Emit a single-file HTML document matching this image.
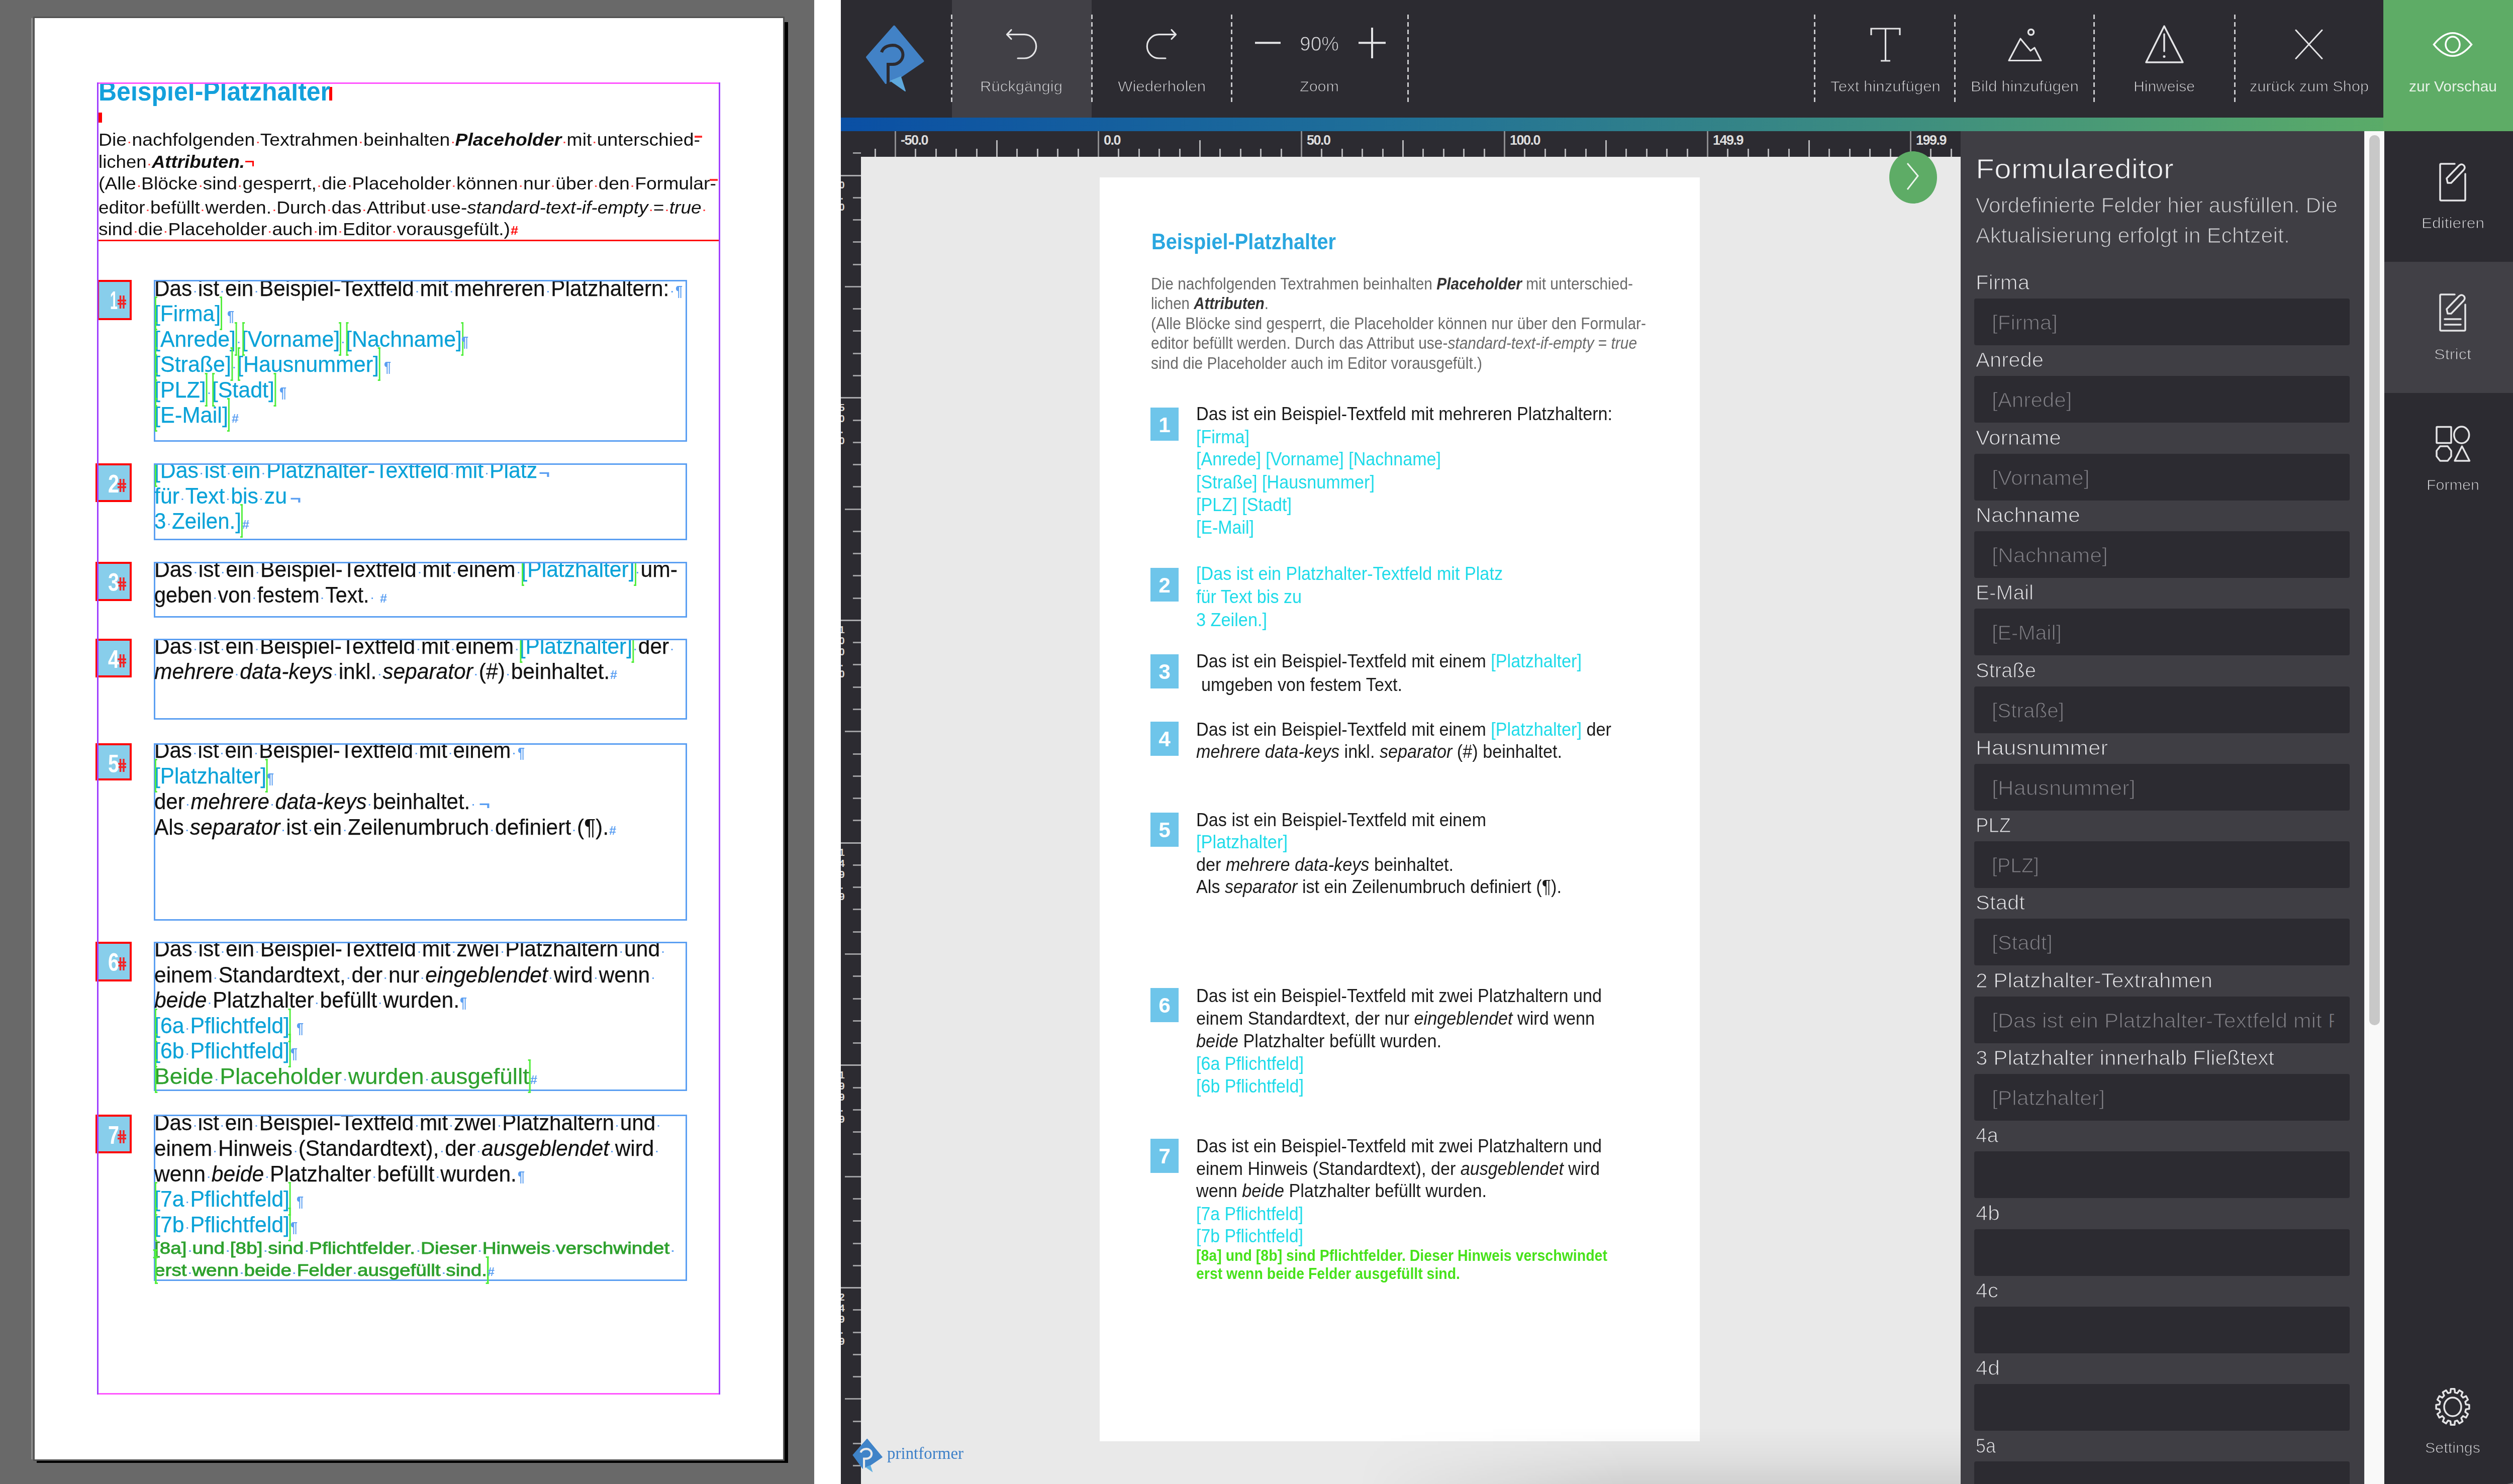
<!DOCTYPE html><html><head><meta charset="utf-8"><style>

html,body{margin:0;padding:0}
body{width:5020px;height:2953px;position:relative;overflow:hidden;background:#fff}
body>div,body>svg{position:absolute}
.t{white-space:pre;line-height:1}
s.d{text-decoration:none;position:relative}
s.d::after{content:'';position:absolute;left:38%;top:62%;width:3px;height:3px;background:var(--c)}
.ph{position:relative}
.ph::before,.ph::after{content:'';position:absolute;top:-9px;bottom:-9px;width:5px;border:3px solid #52ee3c;box-sizing:border-box}
.ph::before{left:1px;border-right:none}
.ph::after{right:-3px;border-left:none}
.phl{position:relative}.phr{position:relative}
.phl::before,.phr::after{content:'';position:absolute;top:-9px;bottom:-9px;width:5px;border:3px solid #52ee3c;box-sizing:border-box}
.phl::before{left:1px;border-right:none}
.phr::after{right:-3px;border-left:none}

</style></head><body>
<div style="left:0px;top:0px;width:1620px;height:2953px;background:#696969;"></div>
<div style="left:62px;top:36px;width:3px;height:2868px;background:#8e8e8e;"></div>
<div style="left:66px;top:33px;width:1495px;height:2874px;background:#535353;"></div>
<div style="left:69px;top:36px;width:1489px;height:2868px;background:#ffffff;"></div>
<div style="left:1561px;top:44px;width:7px;height:2867px;background:#000;"></div>
<div style="left:73px;top:2907px;width:1495px;height:4px;background:#000;"></div>
<div style="left:193px;top:164px;width:1240px;height:3px;background:#ff55ff;"></div>
<div style="left:193px;top:2772px;width:1240px;height:3px;background:#ff55ff;"></div>
<div style="left:193px;top:164px;width:3px;height:2611px;background:#a040ff;"></div>
<div style="left:1430px;top:164px;width:3px;height:2611px;background:#a040ff;"></div>
<div style="left:196px;top:477px;width:1234px;height:3px;background:#ff0000;"></div>
<div style="left:306px;top:557px;width:1061px;height:322px;box-sizing:border-box;border:3px solid #5b9ff2"></div>
<div style="left:306px;top:922px;width:1061px;height:153px;box-sizing:border-box;border:3px solid #5b9ff2"></div>
<div style="left:306px;top:1118px;width:1061px;height:111px;box-sizing:border-box;border:3px solid #5b9ff2"></div>
<div style="left:306px;top:1271px;width:1061px;height:161px;box-sizing:border-box;border:3px solid #5b9ff2"></div>
<div style="left:306px;top:1479px;width:1061px;height:353px;box-sizing:border-box;border:3px solid #5b9ff2"></div>
<div style="left:306px;top:1874px;width:1061px;height:297px;box-sizing:border-box;border:3px solid #5b9ff2"></div>
<div style="left:306px;top:2218px;width:1061px;height:331px;box-sizing:border-box;border:3px solid #5b9ff2"></div>
<div style="left:193px;top:557px;width:69px;height:80px;box-sizing:border-box;border:4px solid #ff0000;background:#88ceeb"></div>
<svg style="left:234px;top:588px" width="17" height="26" viewBox="0 0 17 26"><path d="M5.5 0 V26 M12 0 V26 M0 10 H17 M0 16.5 H17" stroke="#ff1010" stroke-width="3.4" fill="none" opacity="0.9"/></svg>
<div style="left:190px;top:922px;width:72px;height:77px;box-sizing:border-box;border:4px solid #ff0000;background:#88ceeb"></div>
<svg style="left:234px;top:953px" width="17" height="26" viewBox="0 0 17 26"><path d="M5.5 0 V26 M12 0 V26 M0 10 H17 M0 16.5 H17" stroke="#ff1010" stroke-width="3.4" fill="none" opacity="0.9"/></svg>
<div style="left:190px;top:1118px;width:72px;height:78px;box-sizing:border-box;border:4px solid #ff0000;background:#88ceeb"></div>
<svg style="left:234px;top:1149px" width="17" height="26" viewBox="0 0 17 26"><path d="M5.5 0 V26 M12 0 V26 M0 10 H17 M0 16.5 H17" stroke="#ff1010" stroke-width="3.4" fill="none" opacity="0.9"/></svg>
<div style="left:190px;top:1271px;width:72px;height:77px;box-sizing:border-box;border:4px solid #ff0000;background:#88ceeb"></div>
<svg style="left:234px;top:1302px" width="17" height="26" viewBox="0 0 17 26"><path d="M5.5 0 V26 M12 0 V26 M0 10 H17 M0 16.5 H17" stroke="#ff1010" stroke-width="3.4" fill="none" opacity="0.9"/></svg>
<div style="left:190px;top:1479px;width:72px;height:74px;box-sizing:border-box;border:4px solid #ff0000;background:#88ceeb"></div>
<svg style="left:234px;top:1510px" width="17" height="26" viewBox="0 0 17 26"><path d="M5.5 0 V26 M12 0 V26 M0 10 H17 M0 16.5 H17" stroke="#ff1010" stroke-width="3.4" fill="none" opacity="0.9"/></svg>
<div style="left:190px;top:1874px;width:72px;height:79px;box-sizing:border-box;border:4px solid #ff0000;background:#88ceeb"></div>
<svg style="left:234px;top:1905px" width="17" height="26" viewBox="0 0 17 26"><path d="M5.5 0 V26 M12 0 V26 M0 10 H17 M0 16.5 H17" stroke="#ff1010" stroke-width="3.4" fill="none" opacity="0.9"/></svg>
<div style="left:190px;top:2218px;width:72px;height:77px;box-sizing:border-box;border:4px solid #ff0000;background:#88ceeb"></div>
<svg style="left:234px;top:2249px" width="17" height="26" viewBox="0 0 17 26"><path d="M5.5 0 V26 M12 0 V26 M0 10 H17 M0 16.5 H17" stroke="#ff1010" stroke-width="3.4" fill="none" opacity="0.9"/></svg>
<div style="left:193px;top:164px;width:3px;height:2611px;background:#a040ff;"></div>
<div style="left:655px;top:173px;width:6px;height:27px;background:#ff0000;"></div>
<div style="left:196px;top:224px;width:7px;height:20px;background:#ff0000;"></div>
<div style="left:1382px;top:270px;width:15px;height:4px;background:#ff3030;"></div>
<div style="left:1412px;top:356px;width:16px;height:4px;background:#ff3030;"></div>
<div style="left:488px;top:320px;width:17px;height:3px;background:#ff0000;"></div>
<div style="left:502px;top:320px;width:3px;height:11px;background:#ff0000;"></div>
<div style="left:1673px;top:0px;width:3342px;height:234px;background:#2c2b31;"></div>
<div style="left:1894px;top:0px;width:278px;height:234px;background:#414046;"></div>
<div style="left:4742px;top:0px;width:275px;height:261px;background:#5eac66;"></div>
<div style="left:1673px;top:234px;width:3069px;height:27px;background:linear-gradient(90deg,#0a4fa4 0%,#1f6f98 35%,#3a8a82 65%,#5aab68 100%);"></div>
<div style="left:1673px;top:261px;width:2228px;height:51px;background:#2c2b31;"></div>
<div style="left:1673px;top:312px;width:40px;height:2641px;background:#2c2b31;"></div>
<div style="left:1713px;top:312px;width:2188px;height:2641px;background:#e9e9e9;"></div>
<div style="left:2188px;top:353px;width:1194px;height:2515px;background:#ffffff;"></div>
<div style="left:2700px;top:2840px;width:1201px;height:113px;background:linear-gradient(180deg,rgba(0,0,0,0) 0%,rgba(0,0,0,0.035) 50%,rgba(0,0,0,0.10) 100%);-webkit-mask-image:linear-gradient(90deg,transparent 0%,#000 45%,#000 100%)"></div>
<div style="left:3901px;top:261px;width:803px;height:2692px;background:#3f3e44;"></div>
<div style="left:4704px;top:261px;width:40px;height:2692px;background:#f9f9f9;box-shadow:inset 1px 0 0 #e6e6e6, inset -1px 0 0 #e6e6e6"></div>
<div style="left:4714px;top:269px;width:21px;height:1771px;background:#c8c8c8;border-radius:10px"></div>
<div style="left:4744px;top:261px;width:271px;height:2692px;background:#2c2b31;"></div>
<div style="left:4744px;top:521px;width:271px;height:261px;background:#414046;"></div>
<div style="left:5015px;top:0px;width:2px;height:2953px;background:#6a6a6e;"></div>
<div style="left:5017px;top:0px;width:3px;height:2953px;background:#000;"></div>
<div style="left:4987px;top:2925px;width:33px;height:28px;background:radial-gradient(circle 40px at 0px 0px,transparent 27.5px,#5f5f63 28px,#5f5f63 30px,#000 30.5px)"></div>
<div style="left:1892px;top:29px;width:3px;height:180px;background:repeating-linear-gradient(180deg,#c9c9cc 0 9px,transparent 9px 15px)"></div>
<div style="left:2171px;top:29px;width:3px;height:180px;background:repeating-linear-gradient(180deg,#c9c9cc 0 9px,transparent 9px 15px)"></div>
<div style="left:2449px;top:29px;width:3px;height:180px;background:repeating-linear-gradient(180deg,#c9c9cc 0 9px,transparent 9px 15px)"></div>
<div style="left:2800px;top:29px;width:3px;height:180px;background:repeating-linear-gradient(180deg,#c9c9cc 0 9px,transparent 9px 15px)"></div>
<div style="left:3609px;top:29px;width:3px;height:180px;background:repeating-linear-gradient(180deg,#c9c9cc 0 9px,transparent 9px 15px)"></div>
<div style="left:3888px;top:29px;width:3px;height:180px;background:repeating-linear-gradient(180deg,#c9c9cc 0 9px,transparent 9px 15px)"></div>
<div style="left:4165px;top:29px;width:3px;height:180px;background:repeating-linear-gradient(180deg,#c9c9cc 0 9px,transparent 9px 15px)"></div>
<div style="left:4445px;top:29px;width:3px;height:180px;background:repeating-linear-gradient(180deg,#c9c9cc 0 9px,transparent 9px 15px)"></div>
<div style="left:1739.5px;top:296px;width:3px;height:16px;background:#b5b5b8"></div>
<div style="left:1779.9px;top:261px;width:3px;height:51px;background:#8d8d90"></div>
<div style="left:1820.3px;top:296px;width:3px;height:16px;background:#b5b5b8"></div>
<div style="left:1860.7px;top:296px;width:3px;height:16px;background:#b5b5b8"></div>
<div style="left:1901.1px;top:296px;width:3px;height:16px;background:#b5b5b8"></div>
<div style="left:1941.5px;top:296px;width:3px;height:16px;background:#b5b5b8"></div>
<div style="left:1981.9px;top:279px;width:3px;height:33px;background:#b5b5b8"></div>
<div style="left:2022.3px;top:296px;width:3px;height:16px;background:#b5b5b8"></div>
<div style="left:2062.7px;top:296px;width:3px;height:16px;background:#b5b5b8"></div>
<div style="left:2103.1px;top:296px;width:3px;height:16px;background:#b5b5b8"></div>
<div style="left:2143.5px;top:296px;width:3px;height:16px;background:#b5b5b8"></div>
<div style="left:2183.9px;top:261px;width:3px;height:51px;background:#8d8d90"></div>
<div style="left:2224.3px;top:296px;width:3px;height:16px;background:#b5b5b8"></div>
<div style="left:2264.7px;top:296px;width:3px;height:16px;background:#b5b5b8"></div>
<div style="left:2305.1px;top:296px;width:3px;height:16px;background:#b5b5b8"></div>
<div style="left:2345.5px;top:296px;width:3px;height:16px;background:#b5b5b8"></div>
<div style="left:2385.9px;top:279px;width:3px;height:33px;background:#b5b5b8"></div>
<div style="left:2426.3px;top:296px;width:3px;height:16px;background:#b5b5b8"></div>
<div style="left:2466.7px;top:296px;width:3px;height:16px;background:#b5b5b8"></div>
<div style="left:2507.1px;top:296px;width:3px;height:16px;background:#b5b5b8"></div>
<div style="left:2547.5px;top:296px;width:3px;height:16px;background:#b5b5b8"></div>
<div style="left:2587.9px;top:261px;width:3px;height:51px;background:#8d8d90"></div>
<div style="left:2628.3px;top:296px;width:3px;height:16px;background:#b5b5b8"></div>
<div style="left:2668.7px;top:296px;width:3px;height:16px;background:#b5b5b8"></div>
<div style="left:2709.1px;top:296px;width:3px;height:16px;background:#b5b5b8"></div>
<div style="left:2749.5px;top:296px;width:3px;height:16px;background:#b5b5b8"></div>
<div style="left:2789.9px;top:279px;width:3px;height:33px;background:#b5b5b8"></div>
<div style="left:2830.3px;top:296px;width:3px;height:16px;background:#b5b5b8"></div>
<div style="left:2870.7px;top:296px;width:3px;height:16px;background:#b5b5b8"></div>
<div style="left:2911.1px;top:296px;width:3px;height:16px;background:#b5b5b8"></div>
<div style="left:2951.5px;top:296px;width:3px;height:16px;background:#b5b5b8"></div>
<div style="left:2991.9px;top:261px;width:3px;height:51px;background:#8d8d90"></div>
<div style="left:3032.3px;top:296px;width:3px;height:16px;background:#b5b5b8"></div>
<div style="left:3072.7px;top:296px;width:3px;height:16px;background:#b5b5b8"></div>
<div style="left:3113.1px;top:296px;width:3px;height:16px;background:#b5b5b8"></div>
<div style="left:3153.5px;top:296px;width:3px;height:16px;background:#b5b5b8"></div>
<div style="left:3193.9px;top:279px;width:3px;height:33px;background:#b5b5b8"></div>
<div style="left:3234.3px;top:296px;width:3px;height:16px;background:#b5b5b8"></div>
<div style="left:3274.7px;top:296px;width:3px;height:16px;background:#b5b5b8"></div>
<div style="left:3315.1px;top:296px;width:3px;height:16px;background:#b5b5b8"></div>
<div style="left:3355.5px;top:296px;width:3px;height:16px;background:#b5b5b8"></div>
<div style="left:3395.9px;top:261px;width:3px;height:51px;background:#8d8d90"></div>
<div style="left:3436.3px;top:296px;width:3px;height:16px;background:#b5b5b8"></div>
<div style="left:3476.7px;top:296px;width:3px;height:16px;background:#b5b5b8"></div>
<div style="left:3517.1px;top:296px;width:3px;height:16px;background:#b5b5b8"></div>
<div style="left:3557.5px;top:296px;width:3px;height:16px;background:#b5b5b8"></div>
<div style="left:3597.9px;top:279px;width:3px;height:33px;background:#b5b5b8"></div>
<div style="left:3638.3px;top:296px;width:3px;height:16px;background:#b5b5b8"></div>
<div style="left:3678.7px;top:296px;width:3px;height:16px;background:#b5b5b8"></div>
<div style="left:3719.1px;top:296px;width:3px;height:16px;background:#b5b5b8"></div>
<div style="left:3759.5px;top:296px;width:3px;height:16px;background:#b5b5b8"></div>
<div style="left:3799.9px;top:261px;width:3px;height:51px;background:#8d8d90"></div>
<div style="left:3840.3px;top:296px;width:3px;height:16px;background:#b5b5b8"></div>
<div style="left:3880.7px;top:296px;width:3px;height:16px;background:#b5b5b8"></div>
<div style="left:1697px;top:303.2px;width:16px;height:3px;background:#9d9da0"></div>
<div style="left:1673px;top:347.5px;width:40px;height:3px;background:#a9a9ac"></div>
<div style="left:1697px;top:391.8px;width:16px;height:3px;background:#9d9da0"></div>
<div style="left:1697px;top:436.0px;width:16px;height:3px;background:#9d9da0"></div>
<div style="left:1697px;top:480.3px;width:16px;height:3px;background:#9d9da0"></div>
<div style="left:1697px;top:524.6px;width:16px;height:3px;background:#9d9da0"></div>
<div style="left:1681px;top:568.9px;width:32px;height:3px;background:#9d9da0"></div>
<div style="left:1697px;top:613.1px;width:16px;height:3px;background:#9d9da0"></div>
<div style="left:1697px;top:657.4px;width:16px;height:3px;background:#9d9da0"></div>
<div style="left:1697px;top:701.7px;width:16px;height:3px;background:#9d9da0"></div>
<div style="left:1697px;top:745.9px;width:16px;height:3px;background:#9d9da0"></div>
<div style="left:1673px;top:790.2px;width:40px;height:3px;background:#a9a9ac"></div>
<div style="left:1697px;top:834.5px;width:16px;height:3px;background:#9d9da0"></div>
<div style="left:1697px;top:878.7px;width:16px;height:3px;background:#9d9da0"></div>
<div style="left:1697px;top:923.0px;width:16px;height:3px;background:#9d9da0"></div>
<div style="left:1697px;top:967.3px;width:16px;height:3px;background:#9d9da0"></div>
<div style="left:1681px;top:1011.6px;width:32px;height:3px;background:#9d9da0"></div>
<div style="left:1697px;top:1055.8px;width:16px;height:3px;background:#9d9da0"></div>
<div style="left:1697px;top:1100.1px;width:16px;height:3px;background:#9d9da0"></div>
<div style="left:1697px;top:1144.4px;width:16px;height:3px;background:#9d9da0"></div>
<div style="left:1697px;top:1188.6px;width:16px;height:3px;background:#9d9da0"></div>
<div style="left:1673px;top:1232.9px;width:40px;height:3px;background:#a9a9ac"></div>
<div style="left:1697px;top:1277.2px;width:16px;height:3px;background:#9d9da0"></div>
<div style="left:1697px;top:1321.4px;width:16px;height:3px;background:#9d9da0"></div>
<div style="left:1697px;top:1365.7px;width:16px;height:3px;background:#9d9da0"></div>
<div style="left:1697px;top:1410.0px;width:16px;height:3px;background:#9d9da0"></div>
<div style="left:1681px;top:1454.2px;width:32px;height:3px;background:#9d9da0"></div>
<div style="left:1697px;top:1498.5px;width:16px;height:3px;background:#9d9da0"></div>
<div style="left:1697px;top:1542.8px;width:16px;height:3px;background:#9d9da0"></div>
<div style="left:1697px;top:1587.1px;width:16px;height:3px;background:#9d9da0"></div>
<div style="left:1697px;top:1631.3px;width:16px;height:3px;background:#9d9da0"></div>
<div style="left:1673px;top:1675.6px;width:40px;height:3px;background:#a9a9ac"></div>
<div style="left:1697px;top:1719.9px;width:16px;height:3px;background:#9d9da0"></div>
<div style="left:1697px;top:1764.1px;width:16px;height:3px;background:#9d9da0"></div>
<div style="left:1697px;top:1808.4px;width:16px;height:3px;background:#9d9da0"></div>
<div style="left:1697px;top:1852.7px;width:16px;height:3px;background:#9d9da0"></div>
<div style="left:1681px;top:1897.0px;width:32px;height:3px;background:#9d9da0"></div>
<div style="left:1697px;top:1941.2px;width:16px;height:3px;background:#9d9da0"></div>
<div style="left:1697px;top:1985.5px;width:16px;height:3px;background:#9d9da0"></div>
<div style="left:1697px;top:2029.8px;width:16px;height:3px;background:#9d9da0"></div>
<div style="left:1697px;top:2074.0px;width:16px;height:3px;background:#9d9da0"></div>
<div style="left:1673px;top:2118.3px;width:40px;height:3px;background:#a9a9ac"></div>
<div style="left:1697px;top:2162.6px;width:16px;height:3px;background:#9d9da0"></div>
<div style="left:1697px;top:2206.8px;width:16px;height:3px;background:#9d9da0"></div>
<div style="left:1697px;top:2251.1px;width:16px;height:3px;background:#9d9da0"></div>
<div style="left:1697px;top:2295.4px;width:16px;height:3px;background:#9d9da0"></div>
<div style="left:1681px;top:2339.7px;width:32px;height:3px;background:#9d9da0"></div>
<div style="left:1697px;top:2383.9px;width:16px;height:3px;background:#9d9da0"></div>
<div style="left:1697px;top:2428.2px;width:16px;height:3px;background:#9d9da0"></div>
<div style="left:1697px;top:2472.5px;width:16px;height:3px;background:#9d9da0"></div>
<div style="left:1697px;top:2516.7px;width:16px;height:3px;background:#9d9da0"></div>
<div style="left:1673px;top:2561.0px;width:40px;height:3px;background:#a9a9ac"></div>
<div style="left:1697px;top:2605.3px;width:16px;height:3px;background:#9d9da0"></div>
<div style="left:1697px;top:2649.5px;width:16px;height:3px;background:#9d9da0"></div>
<div style="left:1697px;top:2693.8px;width:16px;height:3px;background:#9d9da0"></div>
<div style="left:1697px;top:2738.1px;width:16px;height:3px;background:#9d9da0"></div>
<div style="left:1681px;top:2782.4px;width:32px;height:3px;background:#9d9da0"></div>
<div style="left:1697px;top:2826.6px;width:16px;height:3px;background:#9d9da0"></div>
<div style="left:1697px;top:2870.9px;width:16px;height:3px;background:#9d9da0"></div>
<div style="left:1697px;top:2915.2px;width:16px;height:3px;background:#9d9da0"></div>
<div style="left:1664px;top:357px;width:22px;font:bold 20px/22px 'Liberation Sans',sans-serif;color:#d8d8d8;text-align:center;clip-path:inset(0 0 0 9px)"><div style="height:22px">0</div><div style="height:22px">.</div><div style="height:22px">0</div></div>
<div style="left:1664px;top:800px;width:22px;font:bold 20px/22px 'Liberation Sans',sans-serif;color:#d8d8d8;text-align:center;clip-path:inset(0 0 0 9px)"><div style="height:22px">5</div><div style="height:22px">0</div><div style="height:22px">.</div><div style="height:22px">0</div></div>
<div style="left:1664px;top:1242px;width:22px;font:bold 20px/22px 'Liberation Sans',sans-serif;color:#d8d8d8;text-align:center;clip-path:inset(0 0 0 9px)"><div style="height:22px">1</div><div style="height:22px">0</div><div style="height:22px">0</div><div style="height:22px">.</div><div style="height:22px">0</div></div>
<div style="left:1664px;top:1685px;width:22px;font:bold 20px/22px 'Liberation Sans',sans-serif;color:#d8d8d8;text-align:center;clip-path:inset(0 0 0 9px)"><div style="height:22px">1</div><div style="height:22px">4</div><div style="height:22px">9</div><div style="height:22px">.</div><div style="height:22px">9</div></div>
<div style="left:1664px;top:2128px;width:22px;font:bold 20px/22px 'Liberation Sans',sans-serif;color:#d8d8d8;text-align:center;clip-path:inset(0 0 0 9px)"><div style="height:22px">1</div><div style="height:22px">9</div><div style="height:22px">9</div><div style="height:22px">.</div><div style="height:22px">9</div></div>
<div style="left:1664px;top:2570px;width:22px;font:bold 20px/22px 'Liberation Sans',sans-serif;color:#d8d8d8;text-align:center;clip-path:inset(0 0 0 9px)"><div style="height:22px">2</div><div style="height:22px">4</div><div style="height:22px">9</div><div style="height:22px">.</div><div style="height:22px">9</div></div>
<div style="left:3759px;top:301px;width:95px;height:104px;border-radius:50%;background:#5eac66"></div>
<svg style="left:3700px;top:280px" width="200" height="150" viewBox="3700 280 200 150"><polyline points="3795,325 3816,350 3795,377" fill="none" stroke="#eef6ee" stroke-width="3"/></svg>
<svg style="left:1673px;top:0" width="3342" height="260" viewBox="1673 0 3342 260" fill="none" stroke="#e4e4e6" stroke-width="3.2" stroke-linecap="round" stroke-linejoin="round">
<path d="M2004 68.6 H2038 A23.7 23.7 0 0 1 2038 116 H2025"/>
<path d="M2012 59.5 L2003.5 68.6 L2012 77.5"/>
<path d="M2339 68.6 H2306 A23.7 23.7 0 0 0 2306 116 H2319"/>
<path d="M2331 59.5 L2339.5 68.6 L2331 77.5"/>
<path d="M2497 85.3 H2548" stroke-width="4" stroke-linecap="butt"/>
<path d="M2703 85.3 H2757 M2730 55 V116" stroke-width="4" stroke-linecap="butt"/>
<path d="M3723 70 V57 H3780 V70 M3751.5 57 V121 M3742 121 H3761" stroke-linecap="butt" stroke-linejoin="miter"/>
<path d="M3997 120.5 L4020 77 L4040 101 L4048 95 L4061 120.5 Z"/>
<circle cx="4041" cy="64" r="5.5" stroke-width="3.5"/>
<path d="M4306 52 L4270 124 H4343 Z" stroke-width="3.5"/>
<path d="M4306 68 V102" stroke-width="3.5"/>
<circle cx="4306" cy="112.5" r="2.5" fill="#e4e4e6" stroke="none"/>
<path d="M4568 60 L4620 116.5 M4620 60 L4568 116.5" stroke-width="3"/>
</svg>
<svg style="left:4820px;top:50px" width="120" height="80" viewBox="4820 50 120 80" fill="none" stroke="#ffffff" stroke-width="3.5">
<path d="M4842.5 88.6 Q4880 43 4917.5 88.6 Q4880 134 4842.5 88.6 Z"/>
<ellipse cx="4880" cy="88.6" rx="14" ry="15.5"/>
</svg>
<svg style="left:1700px;top:30px" width="170" height="170" viewBox="1700 30 170 170">
<path d="M1779 52.5 L1836.5 121.5 L1792 152 L1762.5 165 L1725 113.7 Z" fill="#4282c6" stroke="#4282c6" stroke-width="4" stroke-linejoin="round"/>
<path d="M1772.5 161 L1792 153 L1801 181 Z" fill="#5ea8dc" stroke="#5ea8dc" stroke-width="2" stroke-linejoin="round"/>
<path d="M1754 104 Q1758 91 1776 90 A20.5 19 0 0 1 1776 128 H1767 V168" fill="none" stroke="#2c2b31" stroke-width="6"/>
</svg>
<svg style="left:1696px;top:2862px" width="60" height="70" viewBox="1722 50 117 134">
<path d="M1779 52.5 L1836.5 121.5 L1792 152 L1762.5 165 L1725 113.7 Z" fill="#3f83c8" stroke="#3f83c8" stroke-width="4" stroke-linejoin="round"/>
<path d="M1772.5 161 L1792 153 L1801 181 Z" fill="#5eaee0"/>
<path d="M1754 104 Q1758 91 1776 90 A20.5 19 0 0 1 1776 128 H1767 V168" fill="none" stroke="#e9e9e9" stroke-width="8"/>
</svg>
<svg style="left:4744px;top:261px" width="271" height="2692" viewBox="4744 261 271 2692" fill="none" stroke="#e4e4e6" stroke-width="3.5" stroke-linejoin="round" stroke-linecap="round">
<path d="M4884 326 H4857 Q4855 326 4855 328 V397 Q4855 399 4857 399 H4903 Q4905 399 4905 397 V346"/>
<path d="M4870 364 L4868 355 L4893 329 Q4898 325 4902 329 Q4906 333 4902 338 L4877 364 Z"/>
<path d="M4884 586 H4857 Q4855 586 4855 588 V656 Q4855 658 4857 658 H4903 Q4905 658 4905 656 V606"/>
<path d="M4870 624 L4868 615 L4893 589 Q4898 585 4902 589 Q4906 593 4902 598 L4877 624 Z"/>
<path d="M4864 635 H4896 M4864 646 H4896"/>
<rect x="4848" y="849.5" width="29" height="32" rx="1"/>
<ellipse cx="4897.7" cy="865.5" rx="15" ry="16.5"/>
<path d="M4855 888 H4870 L4877 897 V908 L4870 917 H4855 L4848 908 V897 Z"/>
<path d="M4898.5 888 L4913.5 917 H4884 Z"/>
</svg>
<svg style="left:4820px;top:2740px" width="120" height="120" viewBox="4820 2740 120 120" fill="none" stroke="#e4e4e6" stroke-width="3.5" stroke-linejoin="round"><polygon points="4875.6,2770.9 4876.2,2763.7 4883.8,2763.7 4884.4,2770.9 4889.3,2772.3 4893.2,2766.5 4899.7,2770.6 4897.0,2777.1 4900.6,2781.1 4906.6,2778.0 4910.4,2785.2 4905.0,2789.3 4906.3,2794.7 4912.9,2795.4 4912.9,2803.6 4906.3,2804.3 4905.0,2809.7 4910.4,2813.8 4906.6,2821.0 4900.6,2817.9 4897.0,2821.9 4899.7,2828.4 4893.2,2832.5 4889.3,2826.7 4884.4,2828.1 4883.8,2835.3 4876.2,2835.3 4875.6,2828.1 4870.7,2826.7 4866.8,2832.5 4860.3,2828.4 4863.0,2821.9 4859.4,2817.9 4853.4,2821.0 4849.6,2813.8 4855.0,2809.7 4853.7,2804.3 4847.1,2803.6 4847.1,2795.4 4853.7,2794.7 4855.0,2789.3 4849.6,2785.2 4853.4,2778.0 4859.4,2781.1 4863.0,2777.1 4860.3,2770.6 4866.8,2766.5 4870.7,2772.3"/><ellipse cx="4880" cy="2799.5" rx="17" ry="18.5"/></svg>
<div style="left:3928px;top:594px;width:747px;height:93px;background:#2c2b31;border-radius:4px;overflow:hidden"></div>
<div style="left:3928px;top:748px;width:747px;height:93px;background:#2c2b31;border-radius:4px;overflow:hidden"></div>
<div style="left:3928px;top:903px;width:747px;height:93px;background:#2c2b31;border-radius:4px;overflow:hidden"></div>
<div style="left:3928px;top:1057px;width:747px;height:93px;background:#2c2b31;border-radius:4px;overflow:hidden"></div>
<div style="left:3928px;top:1211px;width:747px;height:93px;background:#2c2b31;border-radius:4px;overflow:hidden"></div>
<div style="left:3928px;top:1366px;width:747px;height:93px;background:#2c2b31;border-radius:4px;overflow:hidden"></div>
<div style="left:3928px;top:1520px;width:747px;height:93px;background:#2c2b31;border-radius:4px;overflow:hidden"></div>
<div style="left:3928px;top:1674px;width:747px;height:93px;background:#2c2b31;border-radius:4px;overflow:hidden"></div>
<div style="left:3928px;top:1828px;width:747px;height:93px;background:#2c2b31;border-radius:4px;overflow:hidden"></div>
<div style="left:3928px;top:1983px;width:747px;height:93px;background:#2c2b31;border-radius:4px;overflow:hidden"></div>
<div style="left:3928px;top:2137px;width:747px;height:93px;background:#2c2b31;border-radius:4px;overflow:hidden"></div>
<div style="left:3928px;top:2291px;width:747px;height:93px;background:#2c2b31;border-radius:4px;overflow:hidden"></div>
<div style="left:3928px;top:2446px;width:747px;height:93px;background:#2c2b31;border-radius:4px;overflow:hidden"></div>
<div style="left:3928px;top:2600px;width:747px;height:93px;background:#2c2b31;border-radius:4px;overflow:hidden"></div>
<div style="left:3928px;top:2754px;width:747px;height:93px;background:#2c2b31;border-radius:4px;overflow:hidden"></div>
<div style="left:3928px;top:2908px;width:747px;height:93px;background:#2c2b31;border-radius:4px;overflow:hidden"></div>
<div style="left:2289px;top:811px;width:56px;height:66px;background:#6ec5ea;"></div>
<div style="left:2289px;top:1130px;width:56px;height:67px;background:#6ec5ea;"></div>
<div style="left:2289px;top:1302px;width:56px;height:68px;background:#6ec5ea;"></div>
<div style="left:2289px;top:1436px;width:56px;height:68px;background:#6ec5ea;"></div>
<div style="left:2289px;top:1617px;width:56px;height:68px;background:#6ec5ea;"></div>
<div style="left:2289px;top:1966px;width:56px;height:68px;background:#6ec5ea;"></div>
<div style="left:2289px;top:2266px;width:56px;height:68px;background:#6ec5ea;"></div>
<div id="t0" class="t" style="top:572.5px;font-family:'Liberation Sans',sans-serif;font-size:50px;color:#ffffff;font-weight:bold;font-style:normal;left:219px;transform-origin:0 0;transform:scaleX(0.5393);">1</div>
<div id="t1" class="t" style="top:937.5px;font-family:'Liberation Sans',sans-serif;font-size:50px;color:#ffffff;font-weight:bold;font-style:normal;left:215px;transform-origin:0 0;transform:scaleX(0.7910);">2</div>
<div id="t2" class="t" style="top:1133.5px;font-family:'Liberation Sans',sans-serif;font-size:50px;color:#ffffff;font-weight:bold;font-style:normal;left:215px;transform-origin:0 0;transform:scaleX(0.7910);">3</div>
<div id="t3" class="t" style="top:1286.5px;font-family:'Liberation Sans',sans-serif;font-size:50px;color:#ffffff;font-weight:bold;font-style:normal;left:215px;transform-origin:0 0;transform:scaleX(0.7910);">4</div>
<div id="t4" class="t" style="top:1494.5px;font-family:'Liberation Sans',sans-serif;font-size:50px;color:#ffffff;font-weight:bold;font-style:normal;left:215px;transform-origin:0 0;transform:scaleX(0.7910);">5</div>
<div id="t5" class="t" style="top:1889.5px;font-family:'Liberation Sans',sans-serif;font-size:50px;color:#ffffff;font-weight:bold;font-style:normal;left:215px;transform-origin:0 0;transform:scaleX(0.7910);">6</div>
<div id="t6" class="t" style="top:2233.5px;font-family:'Liberation Sans',sans-serif;font-size:50px;color:#ffffff;font-weight:bold;font-style:normal;left:215px;transform-origin:0 0;transform:scaleX(0.7910);">7</div>
<div id="t7" class="t" style="top:154.9px;font-family:'Liberation Sans',sans-serif;font-size:53px;color:#13a0dc;font-weight:bold;font-style:normal;left:196px;transform-origin:0 0;transform:scaleX(0.9429);clip-path:inset(12px -20px -20px -20px)">Beispiel-Platzhalter</div>
<div id="t8" class="t" style="top:260.2px;font-family:'Liberation Sans',sans-serif;font-size:35px;color:#111;font-weight:normal;font-style:normal;left:196px;transform-origin:0 0;transform:scaleX(1.0662);">Die<s class="d" style="--c:#ff4040"> </s>nachfolgenden<s class="d" style="--c:#ff4040"> </s>Textrahmen<s class="d" style="--c:#ff4040"> </s>beinhalten<s class="d" style="--c:#ff4040"> </s><b><i>Placeholder</i></b><s class="d" style="--c:#ff4040"> </s>mit<s class="d" style="--c:#ff4040"> </s>unterschied-</div>
<div id="t9" class="t" style="top:304.2px;font-family:'Liberation Sans',sans-serif;font-size:35px;color:#111;font-weight:normal;font-style:normal;left:196px;transform-origin:0 0;transform:scaleX(1.0464);">lichen<s class="d" style="--c:#ff4040"> </s><b><i>Attributen.</i></b></div>
<div id="t10" class="t" style="top:347.2px;font-family:'Liberation Sans',sans-serif;font-size:35px;color:#111;font-weight:normal;font-style:normal;left:196px;transform-origin:0 0;transform:scaleX(1.0669);">(Alle<s class="d" style="--c:#ff4040"> </s>Blöcke<s class="d" style="--c:#ff4040"> </s>sind<s class="d" style="--c:#ff4040"> </s>gesperrt,<s class="d" style="--c:#ff4040"> </s>die<s class="d" style="--c:#ff4040"> </s>Placeholder<s class="d" style="--c:#ff4040"> </s>können<s class="d" style="--c:#ff4040"> </s>nur<s class="d" style="--c:#ff4040"> </s>über<s class="d" style="--c:#ff4040"> </s>den<s class="d" style="--c:#ff4040"> </s>Formular-</div>
<div id="t11" class="t" style="top:395.2px;font-family:'Liberation Sans',sans-serif;font-size:35px;color:#111;font-weight:normal;font-style:normal;left:196px;transform-origin:0 0;transform:scaleX(1.0585);">editor<s class="d" style="--c:#ff4040"> </s>befüllt<s class="d" style="--c:#ff4040"> </s>werden.<s class="d" style="--c:#ff4040"> </s>Durch<s class="d" style="--c:#ff4040"> </s>das<s class="d" style="--c:#ff4040"> </s>Attribut<s class="d" style="--c:#ff4040"> </s>use-<i>standard-text-if-empty</i><s class="d" style="--c:#ff4040"> </s>=<s class="d" style="--c:#ff4040"> </s><i>true</i><s class="d" style="--c:#ff4040"> </s></div>
<div id="t12" class="t" style="top:438.2px;font-family:'Liberation Sans',sans-serif;font-size:35px;color:#111;font-weight:normal;font-style:normal;left:196px;transform-origin:0 0;transform:scaleX(1.0629);">sind<s class="d" style="--c:#ff4040"> </s>die<s class="d" style="--c:#ff4040"> </s>Placeholder<s class="d" style="--c:#ff4040"> </s>auch<s class="d" style="--c:#ff4040"> </s>im<s class="d" style="--c:#ff4040"> </s>Editor<s class="d" style="--c:#ff4040"> </s>vorausgefült.)</div>
<div id="t13" class="t" style="top:446.6px;font-family:'Liberation Sans',sans-serif;font-size:24px;color:#ff0000;font-weight:bold;font-style:normal;left:1016px;transform-origin:0 0;transform:scaleX(1.1228);">#</div>
<div id="t14" class="t" style="top:551.6px;font-family:'Liberation Sans',sans-serif;font-size:44px;color:#111;font-weight:normal;font-style:normal;left:307px;transform-origin:0 0;transform:scaleX(0.9606);clip-path:inset(8.4px -40px -40px -40px);-webkit-text-stroke:0.25px currentColor;">Das<s class="d" style="--c:#5b9ff2"> </s>ist<s class="d" style="--c:#5b9ff2"> </s>ein<s class="d" style="--c:#5b9ff2"> </s>Beispiel-Textfeld<s class="d" style="--c:#5b9ff2"> </s>mit<s class="d" style="--c:#5b9ff2"> </s>mehreren<s class="d" style="--c:#5b9ff2"> </s>Platzhaltern:<s class="d" style="--c:#5b9ff2"> </s></div>
<div id="t15" class="t" style="top:563.5px;font-family:'Liberation Sans',sans-serif;font-size:30px;color:#5b9ff2;font-weight:bold;font-style:normal;left:1344px;transform-origin:0 0;transform:scaleX(0.8390);">¶</div>
<div id="t16" class="t" style="top:601.6px;font-family:'Liberation Sans',sans-serif;font-size:44px;color:#0aa2d8;font-weight:normal;font-style:normal;left:307px;transform-origin:0 0;transform:scaleX(0.9643);-webkit-text-stroke:0.25px currentColor;"><span class="ph" style="color:#0aa2d8">[Firma]</span></div>
<div id="t17" class="t" style="top:613.5px;font-family:'Liberation Sans',sans-serif;font-size:30px;color:#5b9ff2;font-weight:bold;font-style:normal;left:452px;transform-origin:0 0;transform:scaleX(0.8390);">¶</div>
<div id="t18" class="t" style="top:652.6px;font-family:'Liberation Sans',sans-serif;font-size:44px;color:#0aa2d8;font-weight:normal;font-style:normal;left:307px;transform-origin:0 0;transform:scaleX(0.9736);-webkit-text-stroke:0.25px currentColor;"><span class="ph" style="color:#0aa2d8">[Anrede]</span><s class="d" style="--c:#5b9ff2"> </s><span class="ph" style="color:#0aa2d8">[Vorname]</span><s class="d" style="--c:#5b9ff2"> </s><span class="ph" style="color:#0aa2d8">[Nachname]</span></div>
<div id="t19" class="t" style="top:664.5px;font-family:'Liberation Sans',sans-serif;font-size:30px;color:#5b9ff2;font-weight:bold;font-style:normal;left:918px;transform-origin:0 0;transform:scaleX(0.8390);">¶</div>
<div id="t20" class="t" style="top:702.6px;font-family:'Liberation Sans',sans-serif;font-size:44px;color:#0aa2d8;font-weight:normal;font-style:normal;left:307px;transform-origin:0 0;transform:scaleX(0.9775);-webkit-text-stroke:0.25px currentColor;"><span class="ph" style="color:#0aa2d8">[Straße]</span><s class="d" style="--c:#5b9ff2"> </s><span class="ph" style="color:#0aa2d8">[Hausnummer]</span></div>
<div id="t21" class="t" style="top:714.5px;font-family:'Liberation Sans',sans-serif;font-size:30px;color:#5b9ff2;font-weight:bold;font-style:normal;left:764px;transform-origin:0 0;transform:scaleX(0.8390);">¶</div>
<div id="t22" class="t" style="top:753.6px;font-family:'Liberation Sans',sans-serif;font-size:44px;color:#0aa2d8;font-weight:normal;font-style:normal;left:307px;transform-origin:0 0;transform:scaleX(0.9772);-webkit-text-stroke:0.25px currentColor;"><span class="ph" style="color:#0aa2d8">[PLZ]</span><s class="d" style="--c:#5b9ff2"> </s><span class="ph" style="color:#0aa2d8">[Stadt]</span></div>
<div id="t23" class="t" style="top:765.5px;font-family:'Liberation Sans',sans-serif;font-size:30px;color:#5b9ff2;font-weight:bold;font-style:normal;left:556px;transform-origin:0 0;transform:scaleX(0.8390);">¶</div>
<div id="t24" class="t" style="top:803.6px;font-family:'Liberation Sans',sans-serif;font-size:44px;color:#0aa2d8;font-weight:normal;font-style:normal;left:307px;transform-origin:0 0;transform:scaleX(0.9858);-webkit-text-stroke:0.25px currentColor;"><span class="ph" style="color:#0aa2d8">[E-Mail]</span></div>
<div id="t25" class="t" style="top:820.6px;font-family:'Liberation Sans',sans-serif;font-size:24px;color:#5b9ff2;font-weight:bold;font-style:normal;left:461px;transform-origin:0 0;transform:scaleX(1.0480);">#</div>
<div id="t26" class="t" style="top:913.6px;font-family:'Liberation Sans',sans-serif;font-size:44px;color:#0aa2d8;font-weight:normal;font-style:normal;left:307px;transform-origin:0 0;transform:scaleX(0.9707);clip-path:inset(11.4px -40px -40px -40px);-webkit-text-stroke:0.25px currentColor;"><span class="phl">[Das<s class="d" style="--c:#5b9ff2"> </s>ist<s class="d" style="--c:#5b9ff2"> </s>ein<s class="d" style="--c:#5b9ff2"> </s>Platzhalter-Textfeld<s class="d" style="--c:#5b9ff2"> </s>mit<s class="d" style="--c:#5b9ff2"> </s>Platz</span></div>
<div id="t27" class="t" style="top:925.5px;font-family:'Liberation Sans',sans-serif;font-size:30px;color:#5b9ff2;font-weight:bold;font-style:normal;left:1072px;transform-origin:0 0;transform:scaleX(1.2549);">¬</div>
<div id="t28" class="t" style="top:964.6px;font-family:'Liberation Sans',sans-serif;font-size:44px;color:#0aa2d8;font-weight:normal;font-style:normal;left:307px;transform-origin:0 0;transform:scaleX(0.9724);-webkit-text-stroke:0.25px currentColor;">für<s class="d" style="--c:#5b9ff2"> </s>Text<s class="d" style="--c:#5b9ff2"> </s>bis<s class="d" style="--c:#5b9ff2"> </s>zu</div>
<div id="t29" class="t" style="top:976.5px;font-family:'Liberation Sans',sans-serif;font-size:30px;color:#5b9ff2;font-weight:bold;font-style:normal;left:577px;transform-origin:0 0;transform:scaleX(1.2549);">¬</div>
<div id="t30" class="t" style="top:1014.6px;font-family:'Liberation Sans',sans-serif;font-size:44px;color:#0aa2d8;font-weight:normal;font-style:normal;left:307px;transform-origin:0 0;transform:scaleX(0.9557);-webkit-text-stroke:0.25px currentColor;"><span class="phr">3<s class="d" style="--c:#5b9ff2"> </s>Zeilen.]</span></div>
<div id="t31" class="t" style="top:1031.6px;font-family:'Liberation Sans',sans-serif;font-size:24px;color:#5b9ff2;font-weight:bold;font-style:normal;left:482px;transform-origin:0 0;transform:scaleX(1.0480);">#</div>
<div id="t32" class="t" style="top:1110.6px;font-family:'Liberation Sans',sans-serif;font-size:44px;color:#111;font-weight:normal;font-style:normal;left:307px;transform-origin:0 0;transform:scaleX(0.9696);clip-path:inset(10.4px -40px -40px -40px);-webkit-text-stroke:0.25px currentColor;">Das<s class="d" style="--c:#5b9ff2"> </s>ist<s class="d" style="--c:#5b9ff2"> </s>ein<s class="d" style="--c:#5b9ff2"> </s>Beispiel-Textfeld<s class="d" style="--c:#5b9ff2"> </s>mit<s class="d" style="--c:#5b9ff2"> </s>einem<s class="d" style="--c:#5b9ff2"> </s><span class="ph" style="color:#0aa2d8">[Platzhalter]</span><s class="d" style="--c:#5b9ff2"> </s>um-</div>
<div id="t33" class="t" style="top:1161.6px;font-family:'Liberation Sans',sans-serif;font-size:44px;color:#111;font-weight:normal;font-style:normal;left:307px;transform-origin:0 0;transform:scaleX(0.9396);-webkit-text-stroke:0.25px currentColor;">geben<s class="d" style="--c:#5b9ff2"> </s>von<s class="d" style="--c:#5b9ff2"> </s>festem<s class="d" style="--c:#5b9ff2"> </s>Text.<s class="d" style="--c:#5b9ff2"> </s></div>
<div id="t34" class="t" style="top:1178.6px;font-family:'Liberation Sans',sans-serif;font-size:24px;color:#5b9ff2;font-weight:bold;font-style:normal;left:756px;transform-origin:0 0;transform:scaleX(1.0480);">#</div>
<div id="t35" class="t" style="top:1263.6px;font-family:'Liberation Sans',sans-serif;font-size:44px;color:#111;font-weight:normal;font-style:normal;left:307px;transform-origin:0 0;transform:scaleX(0.9649);clip-path:inset(10.4px -40px -40px -40px);-webkit-text-stroke:0.25px currentColor;">Das<s class="d" style="--c:#5b9ff2"> </s>ist<s class="d" style="--c:#5b9ff2"> </s>ein<s class="d" style="--c:#5b9ff2"> </s>Beispiel-Textfeld<s class="d" style="--c:#5b9ff2"> </s>mit<s class="d" style="--c:#5b9ff2"> </s>einem<s class="d" style="--c:#5b9ff2"> </s><span class="ph" style="color:#0aa2d8">[Platzhalter]</span><s class="d" style="--c:#5b9ff2"> </s>der<s class="d" style="--c:#5b9ff2"> </s></div>
<div id="t36" class="t" style="top:1313.6px;font-family:'Liberation Sans',sans-serif;font-size:44px;color:#111;font-weight:normal;font-style:normal;left:307px;transform-origin:0 0;transform:scaleX(0.9672);-webkit-text-stroke:0.25px currentColor;"><i>mehrere<s class="d" style="--c:#5b9ff2"> </s>data-keys</i><s class="d" style="--c:#5b9ff2"> </s>inkl.<s class="d" style="--c:#5b9ff2"> </s><i>separator</i><s class="d" style="--c:#5b9ff2"> </s>(#)<s class="d" style="--c:#5b9ff2"> </s>beinhaltet.</div>
<div id="t37" class="t" style="top:1330.6px;font-family:'Liberation Sans',sans-serif;font-size:24px;color:#5b9ff2;font-weight:bold;font-style:normal;left:1214px;transform-origin:0 0;transform:scaleX(1.0480);">#</div>
<div id="t38" class="t" style="top:1470.6px;font-family:'Liberation Sans',sans-serif;font-size:44px;color:#111;font-weight:normal;font-style:normal;left:307px;transform-origin:0 0;transform:scaleX(0.9572);clip-path:inset(11.4px -40px -40px -40px);-webkit-text-stroke:0.25px currentColor;">Das<s class="d" style="--c:#5b9ff2"> </s>ist<s class="d" style="--c:#5b9ff2"> </s>ein<s class="d" style="--c:#5b9ff2"> </s>Beispiel-Textfeld<s class="d" style="--c:#5b9ff2"> </s>mit<s class="d" style="--c:#5b9ff2"> </s>einem<s class="d" style="--c:#5b9ff2"> </s></div>
<div id="t39" class="t" style="top:1482.5px;font-family:'Liberation Sans',sans-serif;font-size:30px;color:#5b9ff2;font-weight:bold;font-style:normal;left:1030px;transform-origin:0 0;transform:scaleX(0.8390);">¶</div>
<div id="t40" class="t" style="top:1521.6px;font-family:'Liberation Sans',sans-serif;font-size:44px;color:#0aa2d8;font-weight:normal;font-style:normal;left:307px;transform-origin:0 0;transform:scaleX(0.9598);-webkit-text-stroke:0.25px currentColor;"><span class="ph" style="color:#0aa2d8">[Platzhalter]</span></div>
<div id="t41" class="t" style="top:1533.5px;font-family:'Liberation Sans',sans-serif;font-size:30px;color:#5b9ff2;font-weight:bold;font-style:normal;left:531px;transform-origin:0 0;transform:scaleX(0.8390);">¶</div>
<div id="t42" class="t" style="top:1572.6px;font-family:'Liberation Sans',sans-serif;font-size:44px;color:#111;font-weight:normal;font-style:normal;left:307px;transform-origin:0 0;transform:scaleX(0.9549);-webkit-text-stroke:0.25px currentColor;">der<s class="d" style="--c:#5b9ff2"> </s><i>mehrere<s class="d" style="--c:#5b9ff2"> </s>data-keys</i><s class="d" style="--c:#5b9ff2"> </s>beinhaltet.<s class="d" style="--c:#5b9ff2"> </s></div>
<div id="t43" class="t" style="top:1584.5px;font-family:'Liberation Sans',sans-serif;font-size:30px;color:#5b9ff2;font-weight:bold;font-style:normal;left:953px;transform-origin:0 0;transform:scaleX(1.2549);">¬</div>
<div id="t44" class="t" style="top:1623.6px;font-family:'Liberation Sans',sans-serif;font-size:44px;color:#111;font-weight:normal;font-style:normal;left:307px;transform-origin:0 0;transform:scaleX(0.9659);-webkit-text-stroke:0.25px currentColor;">Als<s class="d" style="--c:#5b9ff2"> </s><i>separator</i><s class="d" style="--c:#5b9ff2"> </s>ist<s class="d" style="--c:#5b9ff2"> </s>ein<s class="d" style="--c:#5b9ff2"> </s>Zeilenumbruch<s class="d" style="--c:#5b9ff2"> </s>definiert<s class="d" style="--c:#5b9ff2"> </s>(¶).</div>
<div id="t45" class="t" style="top:1640.6px;font-family:'Liberation Sans',sans-serif;font-size:24px;color:#5b9ff2;font-weight:bold;font-style:normal;left:1212px;transform-origin:0 0;transform:scaleX(1.0480);">#</div>
<div id="t46" class="t" style="top:1865.6px;font-family:'Liberation Sans',sans-serif;font-size:44px;color:#111;font-weight:normal;font-style:normal;left:307px;transform-origin:0 0;transform:scaleX(0.9680);clip-path:inset(11.4px -40px -40px -40px);-webkit-text-stroke:0.25px currentColor;">Das<s class="d" style="--c:#5b9ff2"> </s>ist<s class="d" style="--c:#5b9ff2"> </s>ein<s class="d" style="--c:#5b9ff2"> </s>Beispiel-Textfeld<s class="d" style="--c:#5b9ff2"> </s>mit<s class="d" style="--c:#5b9ff2"> </s>zwei<s class="d" style="--c:#5b9ff2"> </s>Platzhaltern<s class="d" style="--c:#5b9ff2"> </s>und<s class="d" style="--c:#5b9ff2"> </s></div>
<div id="t47" class="t" style="top:1917.6px;font-family:'Liberation Sans',sans-serif;font-size:44px;color:#111;font-weight:normal;font-style:normal;left:307px;transform-origin:0 0;transform:scaleX(0.9668);-webkit-text-stroke:0.25px currentColor;">einem<s class="d" style="--c:#5b9ff2"> </s>Standardtext,<s class="d" style="--c:#5b9ff2"> </s>der<s class="d" style="--c:#5b9ff2"> </s>nur<s class="d" style="--c:#5b9ff2"> </s><i>eingeblendet</i><s class="d" style="--c:#5b9ff2"> </s>wird<s class="d" style="--c:#5b9ff2"> </s>wenn<s class="d" style="--c:#5b9ff2"> </s></div>
<div id="t48" class="t" style="top:1967.6px;font-family:'Liberation Sans',sans-serif;font-size:44px;color:#111;font-weight:normal;font-style:normal;left:307px;transform-origin:0 0;transform:scaleX(0.9693);-webkit-text-stroke:0.25px currentColor;"><i>beide</i><s class="d" style="--c:#5b9ff2"> </s>Platzhalter<s class="d" style="--c:#5b9ff2"> </s>befüllt<s class="d" style="--c:#5b9ff2"> </s>wurden.</div>
<div id="t49" class="t" style="top:1979.5px;font-family:'Liberation Sans',sans-serif;font-size:30px;color:#5b9ff2;font-weight:bold;font-style:normal;left:915px;transform-origin:0 0;transform:scaleX(0.8390);">¶</div>
<div id="t50" class="t" style="top:2018.6px;font-family:'Liberation Sans',sans-serif;font-size:44px;color:#0aa2d8;font-weight:normal;font-style:normal;left:307px;transform-origin:0 0;transform:scaleX(0.9733);-webkit-text-stroke:0.25px currentColor;"><span class="ph" style="color:#0aa2d8">[6a<s class="d" style="--c:#5b9ff2"> </s>Pflichtfeld]</span></div>
<div id="t51" class="t" style="top:2030.5px;font-family:'Liberation Sans',sans-serif;font-size:30px;color:#5b9ff2;font-weight:bold;font-style:normal;left:590px;transform-origin:0 0;transform:scaleX(0.8390);">¶</div>
<div id="t52" class="t" style="top:2068.6px;font-family:'Liberation Sans',sans-serif;font-size:44px;color:#0aa2d8;font-weight:normal;font-style:normal;left:307px;transform-origin:0 0;transform:scaleX(0.9733);-webkit-text-stroke:0.25px currentColor;"><span class="ph" style="color:#0aa2d8">[6b<s class="d" style="--c:#5b9ff2"> </s>Pflichtfeld]</span></div>
<div id="t53" class="t" style="top:2080.5px;font-family:'Liberation Sans',sans-serif;font-size:30px;color:#5b9ff2;font-weight:bold;font-style:normal;left:578px;transform-origin:0 0;transform:scaleX(0.8390);">¶</div>
<div id="t54" class="t" style="top:2119.6px;font-family:'Liberation Sans',sans-serif;font-size:44px;color:#2ea12e;font-weight:normal;font-style:normal;left:307px;transform-origin:0 0;transform:scaleX(1.0444);-webkit-text-stroke:0.25px currentColor;"><span class="ph">Beide<s class="d" style="--c:#5b9ff2"> </s>Placeholder<s class="d" style="--c:#5b9ff2"> </s>wurden<s class="d" style="--c:#5b9ff2"> </s>ausgefüllt</span></div>
<div id="t55" class="t" style="top:2136.6px;font-family:'Liberation Sans',sans-serif;font-size:24px;color:#5b9ff2;font-weight:bold;font-style:normal;left:1055px;transform-origin:0 0;transform:scaleX(1.0480);">#</div>
<div id="t56" class="t" style="top:2211.6px;font-family:'Liberation Sans',sans-serif;font-size:44px;color:#111;font-weight:normal;font-style:normal;left:307px;transform-origin:0 0;transform:scaleX(0.9594);clip-path:inset(9.4px -40px -40px -40px);-webkit-text-stroke:0.25px currentColor;">Das<s class="d" style="--c:#5b9ff2"> </s>ist<s class="d" style="--c:#5b9ff2"> </s>ein<s class="d" style="--c:#5b9ff2"> </s>Beispiel-Textfeld<s class="d" style="--c:#5b9ff2"> </s>mit<s class="d" style="--c:#5b9ff2"> </s>zwei<s class="d" style="--c:#5b9ff2"> </s>Platzhaltern<s class="d" style="--c:#5b9ff2"> </s>und<s class="d" style="--c:#5b9ff2"> </s></div>
<div id="t57" class="t" style="top:2262.6px;font-family:'Liberation Sans',sans-serif;font-size:44px;color:#111;font-weight:normal;font-style:normal;left:307px;transform-origin:0 0;transform:scaleX(0.9610);-webkit-text-stroke:0.25px currentColor;">einem<s class="d" style="--c:#5b9ff2"> </s>Hinweis<s class="d" style="--c:#5b9ff2"> </s>(Standardtext),<s class="d" style="--c:#5b9ff2"> </s>der<s class="d" style="--c:#5b9ff2"> </s><i>ausgeblendet</i><s class="d" style="--c:#5b9ff2"> </s>wird<s class="d" style="--c:#5b9ff2"> </s></div>
<div id="t58" class="t" style="top:2313.6px;font-family:'Liberation Sans',sans-serif;font-size:44px;color:#111;font-weight:normal;font-style:normal;left:307px;transform-origin:0 0;transform:scaleX(0.9695);-webkit-text-stroke:0.25px currentColor;">wenn<s class="d" style="--c:#5b9ff2"> </s><i>beide</i><s class="d" style="--c:#5b9ff2"> </s>Platzhalter<s class="d" style="--c:#5b9ff2"> </s>befüllt<s class="d" style="--c:#5b9ff2"> </s>wurden.</div>
<div id="t59" class="t" style="top:2325.5px;font-family:'Liberation Sans',sans-serif;font-size:30px;color:#5b9ff2;font-weight:bold;font-style:normal;left:1030px;transform-origin:0 0;transform:scaleX(0.8390);">¶</div>
<div id="t60" class="t" style="top:2363.6px;font-family:'Liberation Sans',sans-serif;font-size:44px;color:#0aa2d8;font-weight:normal;font-style:normal;left:307px;transform-origin:0 0;transform:scaleX(0.9733);-webkit-text-stroke:0.25px currentColor;"><span class="ph" style="color:#0aa2d8">[7a<s class="d" style="--c:#5b9ff2"> </s>Pflichtfeld]</span></div>
<div id="t61" class="t" style="top:2375.5px;font-family:'Liberation Sans',sans-serif;font-size:30px;color:#5b9ff2;font-weight:bold;font-style:normal;left:590px;transform-origin:0 0;transform:scaleX(0.8390);">¶</div>
<div id="t62" class="t" style="top:2414.6px;font-family:'Liberation Sans',sans-serif;font-size:44px;color:#0aa2d8;font-weight:normal;font-style:normal;left:307px;transform-origin:0 0;transform:scaleX(0.9733);-webkit-text-stroke:0.25px currentColor;"><span class="ph" style="color:#0aa2d8">[7b<s class="d" style="--c:#5b9ff2"> </s>Pflichtfeld]</span></div>
<div id="t63" class="t" style="top:2426.5px;font-family:'Liberation Sans',sans-serif;font-size:30px;color:#5b9ff2;font-weight:bold;font-style:normal;left:578px;transform-origin:0 0;transform:scaleX(0.8390);">¶</div>
<div id="t64" class="t" style="top:2466.9px;font-family:'Liberation Sans',sans-serif;font-size:33px;color:#2ea12e;font-weight:normal;font-style:normal;left:307px;transform-origin:0 0;transform:scaleX(1.1741);-webkit-text-stroke:0.9px currentColor;"><span class="ph" style="display:inline-block;height:100%"></span>[8a]<s class="d" style="--c:#5b9ff2"> </s>und<s class="d" style="--c:#5b9ff2"> </s>[8b]<s class="d" style="--c:#5b9ff2"> </s>sind<s class="d" style="--c:#5b9ff2"> </s>Pflichtfelder.<s class="d" style="--c:#5b9ff2"> </s>Dieser<s class="d" style="--c:#5b9ff2"> </s>Hinweis<s class="d" style="--c:#5b9ff2"> </s>verschwindet<s class="d" style="--c:#5b9ff2"> </s></div>
<div id="t65" class="t" style="top:2510.9px;font-family:'Liberation Sans',sans-serif;font-size:33px;color:#2ea12e;font-weight:normal;font-style:normal;left:307px;transform-origin:0 0;transform:scaleX(1.1716);-webkit-text-stroke:0.9px currentColor;"><span class="ph">erst<s class="d" style="--c:#5b9ff2"> </s>wenn<s class="d" style="--c:#5b9ff2"> </s>beide<s class="d" style="--c:#5b9ff2"> </s>Felder<s class="d" style="--c:#5b9ff2"> </s>ausgefüllt<s class="d" style="--c:#5b9ff2"> </s>sind.</span></div>
<div id="t66" class="t" style="top:2518.6px;font-family:'Liberation Sans',sans-serif;font-size:24px;color:#5b9ff2;font-weight:bold;font-style:normal;left:970px;transform-origin:0 0;transform:scaleX(1.0480);">#</div>
<div id="t67" class="t" style="top:156.5px;font-family:'Liberation Sans',sans-serif;font-size:30px;color:#d9d9dc;font-weight:normal;font-style:normal;left:1950.0px;transform-origin:0 0;transform:scaleX(1.0351);-webkit-text-stroke:1px #414046;">Rückgängig</div>
<div id="t68" class="t" style="top:156.5px;font-family:'Liberation Sans',sans-serif;font-size:30px;color:#d9d9dc;font-weight:normal;font-style:normal;left:2223.5px;transform-origin:0 0;transform:scaleX(1.0390);-webkit-text-stroke:1px #2c2b31;">Wiederholen</div>
<div id="t69" class="t" style="top:156.5px;font-family:'Liberation Sans',sans-serif;font-size:30px;color:#d9d9dc;font-weight:normal;font-style:normal;left:2586.0px;transform-origin:0 0;transform:scaleX(1.0171);-webkit-text-stroke:1px #2c2b31;">Zoom</div>
<div id="t70" class="t" style="top:67.0px;font-family:'Liberation Sans',sans-serif;font-size:40px;color:#d9d9dc;font-weight:normal;font-style:normal;left:2586.0px;transform-origin:0 0;transform:scaleX(0.9742);-webkit-text-stroke:1px #2c2b31;">90%</div>
<div id="t71" class="t" style="top:156.5px;font-family:'Liberation Sans',sans-serif;font-size:30px;color:#d9d9dc;font-weight:normal;font-style:normal;left:3641.5px;transform-origin:0 0;transform:scaleX(1.0421);-webkit-text-stroke:1px #2c2b31;">Text hinzufügen</div>
<div id="t72" class="t" style="top:156.5px;font-family:'Liberation Sans',sans-serif;font-size:30px;color:#d9d9dc;font-weight:normal;font-style:normal;left:3920.5px;transform-origin:0 0;transform:scaleX(1.0480);-webkit-text-stroke:1px #2c2b31;">Bild hinzufügen</div>
<div id="t73" class="t" style="top:156.5px;font-family:'Liberation Sans',sans-serif;font-size:30px;color:#d9d9dc;font-weight:normal;font-style:normal;left:4245.0px;transform-origin:0 0;transform:scaleX(1.0023);-webkit-text-stroke:1px #2c2b31;">Hinweise</div>
<div id="t74" class="t" style="top:156.5px;font-family:'Liberation Sans',sans-serif;font-size:30px;color:#d9d9dc;font-weight:normal;font-style:normal;left:4475.5px;transform-origin:0 0;transform:scaleX(1.0225);-webkit-text-stroke:1px #2c2b31;">zurück zum Shop</div>
<div id="t75" class="t" style="top:156.5px;font-family:'Liberation Sans',sans-serif;font-size:30px;color:#e6f2e6;font-weight:normal;font-style:normal;left:4792.5px;transform-origin:0 0;transform:scaleX(0.9995);">zur Vorschau</div>
<div id="t76" class="t" style="top:266.1px;font-family:'Liberation Sans',sans-serif;font-size:27px;color:#dedede;font-weight:bold;font-style:normal;left:1792px;transform-origin:0 0;letter-spacing:-1.5px">-50.0</div>
<div id="t77" class="t" style="top:266.1px;font-family:'Liberation Sans',sans-serif;font-size:27px;color:#dedede;font-weight:bold;font-style:normal;left:2196px;transform-origin:0 0;letter-spacing:-1.5px">0.0</div>
<div id="t78" class="t" style="top:266.1px;font-family:'Liberation Sans',sans-serif;font-size:27px;color:#dedede;font-weight:bold;font-style:normal;left:2600px;transform-origin:0 0;letter-spacing:-1.5px">50.0</div>
<div id="t79" class="t" style="top:266.1px;font-family:'Liberation Sans',sans-serif;font-size:27px;color:#dedede;font-weight:bold;font-style:normal;left:3004px;transform-origin:0 0;letter-spacing:-1.5px">100.0</div>
<div id="t80" class="t" style="top:266.1px;font-family:'Liberation Sans',sans-serif;font-size:27px;color:#dedede;font-weight:bold;font-style:normal;left:3408px;transform-origin:0 0;letter-spacing:-1.5px">149.9</div>
<div id="t81" class="t" style="top:266.1px;font-family:'Liberation Sans',sans-serif;font-size:27px;color:#dedede;font-weight:bold;font-style:normal;left:3812px;transform-origin:0 0;letter-spacing:-1.5px">199.9</div>
<div id="t82" class="t" style="top:2874.8px;font-family:'Liberation Serif',sans-serif;font-size:34px;color:#3d80c8;font-weight:normal;font-style:normal;left:1765px;transform-origin:0 0;transform:scaleX(0.9699);">printformer</div>
<div id="t83" class="t" style="top:428.5px;font-family:'Liberation Sans',sans-serif;font-size:30px;color:#d9d9dc;font-weight:normal;font-style:normal;left:4817.5px;transform-origin:0 0;transform:scaleX(1.0557);-webkit-text-stroke:1px #2c2b31;">Editieren</div>
<div id="t84" class="t" style="top:689.5px;font-family:'Liberation Sans',sans-serif;font-size:30px;color:#d9d9dc;font-weight:normal;font-style:normal;left:4843.0px;transform-origin:0 0;transform:scaleX(1.0828);-webkit-text-stroke:1px #414046;">Strict</div>
<div id="t85" class="t" style="top:949.5px;font-family:'Liberation Sans',sans-serif;font-size:30px;color:#d9d9dc;font-weight:normal;font-style:normal;left:4827.5px;transform-origin:0 0;transform:scaleX(1.0159);-webkit-text-stroke:1px #2c2b31;">Formen</div>
<div id="t86" class="t" style="top:2865.5px;font-family:'Liberation Sans',sans-serif;font-size:30px;color:#d9d9dc;font-weight:normal;font-style:normal;left:4825.0px;transform-origin:0 0;transform:scaleX(1.0147);-webkit-text-stroke:1px #2c2b31;">Settings</div>
<div id="t87" class="t" style="top:309.2px;font-family:'Liberation Sans',sans-serif;font-size:55px;color:#f0f0f2;font-weight:normal;font-style:normal;left:3931px;transform-origin:0 0;transform:scaleX(1.1018);-webkit-text-stroke:1.2px #3f3e44;paint-order:normal;">Formulareditor</div>
<div id="t88" class="t" style="top:388.3px;font-family:'Liberation Sans',sans-serif;font-size:42px;color:#cfcfd2;font-weight:normal;font-style:normal;left:3931px;transform-origin:0 0;transform:scaleX(1.0079);-webkit-text-stroke:1.2px #3f3e44;paint-order:normal;">Vordefinierte Felder hier ausfüllen. Die</div>
<div id="t89" class="t" style="top:448.3px;font-family:'Liberation Sans',sans-serif;font-size:42px;color:#cfcfd2;font-weight:normal;font-style:normal;left:3931px;transform-origin:0 0;transform:scaleX(1.0257);-webkit-text-stroke:1.2px #3f3e44;paint-order:normal;">Aktualisierung erfolgt in Echtzeit.</div>
<div id="t90" class="t" style="top:542.0px;font-family:'Liberation Sans',sans-serif;font-size:40px;color:#e3e3e6;font-weight:normal;font-style:normal;left:3931px;transform-origin:0 0;transform:scaleX(1.0468);-webkit-text-stroke:1.2px #3f3e44;paint-order:normal;">Firma</div>
<div id="t91" class="t" style="top:622.0px;font-family:'Liberation Sans',sans-serif;font-size:40px;color:#7f7e84;font-weight:normal;font-style:normal;left:3963px;transform-origin:0 0;transform:scaleX(1.0527);-webkit-text-stroke:1.2px #2c2b31;paint-order:normal;">[Firma]</div>
<div id="t92" class="t" style="top:696.3px;font-family:'Liberation Sans',sans-serif;font-size:40px;color:#e3e3e6;font-weight:normal;font-style:normal;left:3931px;transform-origin:0 0;transform:scaleX(1.0466);-webkit-text-stroke:1.2px #3f3e44;paint-order:normal;">Anrede</div>
<div id="t93" class="t" style="top:776.3px;font-family:'Liberation Sans',sans-serif;font-size:40px;color:#7f7e84;font-weight:normal;font-style:normal;left:3963px;transform-origin:0 0;transform:scaleX(1.0548);-webkit-text-stroke:1.2px #2c2b31;paint-order:normal;">[Anrede]</div>
<div id="t94" class="t" style="top:850.6px;font-family:'Liberation Sans',sans-serif;font-size:40px;color:#e3e3e6;font-weight:normal;font-style:normal;left:3931px;transform-origin:0 0;transform:scaleX(1.0618);-webkit-text-stroke:1.2px #3f3e44;paint-order:normal;">Vorname</div>
<div id="t95" class="t" style="top:930.6px;font-family:'Liberation Sans',sans-serif;font-size:40px;color:#7f7e84;font-weight:normal;font-style:normal;left:3963px;transform-origin:0 0;transform:scaleX(1.0668);-webkit-text-stroke:1.2px #2c2b31;paint-order:normal;">[Vorname]</div>
<div id="t96" class="t" style="top:1004.9px;font-family:'Liberation Sans',sans-serif;font-size:40px;color:#e3e3e6;font-weight:normal;font-style:normal;left:3931px;transform-origin:0 0;transform:scaleX(1.0753);-webkit-text-stroke:1.2px #3f3e44;paint-order:normal;">Nachname</div>
<div id="t97" class="t" style="top:1084.9px;font-family:'Liberation Sans',sans-serif;font-size:40px;color:#7f7e84;font-weight:normal;font-style:normal;left:3963px;transform-origin:0 0;transform:scaleX(1.0711);-webkit-text-stroke:1.2px #2c2b31;paint-order:normal;">[Nachname]</div>
<div id="t98" class="t" style="top:1159.2px;font-family:'Liberation Sans',sans-serif;font-size:40px;color:#e3e3e6;font-weight:normal;font-style:normal;left:3931px;transform-origin:0 0;transform:scaleX(1.0146);-webkit-text-stroke:1.2px #3f3e44;paint-order:normal;">E-Mail</div>
<div id="t99" class="t" style="top:1239.2px;font-family:'Liberation Sans',sans-serif;font-size:40px;color:#7f7e84;font-weight:normal;font-style:normal;left:3963px;transform-origin:0 0;transform:scaleX(1.0252);-webkit-text-stroke:1.2px #2c2b31;paint-order:normal;">[E-Mail]</div>
<div id="t100" class="t" style="top:1313.5px;font-family:'Liberation Sans',sans-serif;font-size:40px;color:#e3e3e6;font-weight:normal;font-style:normal;left:3931px;transform-origin:0 0;transform:scaleX(0.9996);-webkit-text-stroke:1.2px #3f3e44;paint-order:normal;">Straße</div>
<div id="t101" class="t" style="top:1393.5px;font-family:'Liberation Sans',sans-serif;font-size:40px;color:#7f7e84;font-weight:normal;font-style:normal;left:3963px;transform-origin:0 0;transform:scaleX(1.0122);-webkit-text-stroke:1.2px #2c2b31;paint-order:normal;">[Straße]</div>
<div id="t102" class="t" style="top:1467.8px;font-family:'Liberation Sans',sans-serif;font-size:40px;color:#e3e3e6;font-weight:normal;font-style:normal;left:3931px;transform-origin:0 0;transform:scaleX(1.0955);-webkit-text-stroke:1.2px #3f3e44;paint-order:normal;">Hausnummer</div>
<div id="t103" class="t" style="top:1547.8px;font-family:'Liberation Sans',sans-serif;font-size:40px;color:#7f7e84;font-weight:normal;font-style:normal;left:3963px;transform-origin:0 0;transform:scaleX(1.0903);-webkit-text-stroke:1.2px #2c2b31;paint-order:normal;">[Hausnummer]</div>
<div id="t104" class="t" style="top:1622.1px;font-family:'Liberation Sans',sans-serif;font-size:40px;color:#e3e3e6;font-weight:normal;font-style:normal;left:3931px;transform-origin:0 0;transform:scaleX(0.9542);-webkit-text-stroke:1.2px #3f3e44;paint-order:normal;">PLZ</div>
<div id="t105" class="t" style="top:1702.1px;font-family:'Liberation Sans',sans-serif;font-size:40px;color:#7f7e84;font-weight:normal;font-style:normal;left:3963px;transform-origin:0 0;transform:scaleX(0.9833);-webkit-text-stroke:1.2px #2c2b31;paint-order:normal;">[PLZ]</div>
<div id="t106" class="t" style="top:1776.4px;font-family:'Liberation Sans',sans-serif;font-size:40px;color:#e3e3e6;font-weight:normal;font-style:normal;left:3931px;transform-origin:0 0;transform:scaleX(1.0492);-webkit-text-stroke:1.2px #3f3e44;paint-order:normal;">Stadt</div>
<div id="t107" class="t" style="top:1856.4px;font-family:'Liberation Sans',sans-serif;font-size:40px;color:#7f7e84;font-weight:normal;font-style:normal;left:3963px;transform-origin:0 0;transform:scaleX(1.0465);-webkit-text-stroke:1.2px #2c2b31;paint-order:normal;">[Stadt]</div>
<div id="t108" class="t" style="top:1930.7px;font-family:'Liberation Sans',sans-serif;font-size:40px;color:#e3e3e6;font-weight:normal;font-style:normal;left:3931px;transform-origin:0 0;transform:scaleX(1.0592);-webkit-text-stroke:1.2px #3f3e44;paint-order:normal;">2 Platzhalter-Textrahmen</div>
<div id="t109" class="t" style="top:2010.7px;font-family:'Liberation Sans',sans-serif;font-size:40px;color:#7f7e84;font-weight:normal;font-style:normal;left:3963px;transform-origin:0 0;transform:scaleX(1.0708);-webkit-text-stroke:1.2px #2c2b31;paint-order:normal;">[Das ist ein Platzhalter-Textfeld mit</div>
<div id="t110" class="t" style="top:2085.0px;font-family:'Liberation Sans',sans-serif;font-size:40px;color:#e3e3e6;font-weight:normal;font-style:normal;left:3931px;transform-origin:0 0;transform:scaleX(1.0560);-webkit-text-stroke:1.2px #3f3e44;paint-order:normal;">3 Platzhalter innerhalb Fließtext</div>
<div id="t111" class="t" style="top:2165.0px;font-family:'Liberation Sans',sans-serif;font-size:40px;color:#7f7e84;font-weight:normal;font-style:normal;left:3963px;transform-origin:0 0;transform:scaleX(1.0652);-webkit-text-stroke:1.2px #2c2b31;paint-order:normal;">[Platzhalter]</div>
<div id="t112" class="t" style="top:2239.3px;font-family:'Liberation Sans',sans-serif;font-size:40px;color:#e3e3e6;font-weight:normal;font-style:normal;left:3931px;transform-origin:0 0;transform:scaleX(1.0112);-webkit-text-stroke:1.2px #3f3e44;paint-order:normal;">4a</div>
<div id="t113" class="t" style="top:2393.6px;font-family:'Liberation Sans',sans-serif;font-size:40px;color:#e3e3e6;font-weight:normal;font-style:normal;left:3931px;transform-origin:0 0;transform:scaleX(1.0787);-webkit-text-stroke:1.2px #3f3e44;paint-order:normal;">4b</div>
<div id="t114" class="t" style="top:2547.9px;font-family:'Liberation Sans',sans-serif;font-size:40px;color:#e3e3e6;font-weight:normal;font-style:normal;left:3931px;transform-origin:0 0;transform:scaleX(1.0651);-webkit-text-stroke:1.2px #3f3e44;paint-order:normal;">4c</div>
<div id="t115" class="t" style="top:2702.2px;font-family:'Liberation Sans',sans-serif;font-size:40px;color:#e3e3e6;font-weight:normal;font-style:normal;left:3931px;transform-origin:0 0;transform:scaleX(1.0787);-webkit-text-stroke:1.2px #3f3e44;paint-order:normal;">4d</div>
<div id="t116" class="t" style="top:2856.5px;font-family:'Liberation Sans',sans-serif;font-size:40px;color:#e3e3e6;font-weight:normal;font-style:normal;left:3931px;transform-origin:0 0;transform:scaleX(0.8989);-webkit-text-stroke:1.2px #3f3e44;paint-order:normal;">5a</div>
<div id="t117" class="t" style="top:2010.7px;font-family:'Liberation Sans',sans-serif;font-size:40px;color:#7f7e84;font-weight:normal;font-style:normal;left:4632px;transform-origin:0 0;clip-path:inset(-10px calc(100% - 12px) -10px 0);-webkit-text-stroke:1.2px #2c2b31;paint-order:normal;">P</div>
<div id="t118" class="t" style="top:460.0px;font-family:'Liberation Sans',sans-serif;font-size:43.5px;color:#2aa7e0;font-weight:bold;font-style:normal;left:2291px;transform-origin:0 0;transform:scaleX(0.9145);">Beispiel-Platzhalter</div>
<div id="t119" class="t" style="top:547.5px;font-family:'Liberation Sans',sans-serif;font-size:33.5px;color:#6a6a6a;font-weight:normal;font-style:normal;left:2290px;transform-origin:0 0;transform:scaleX(0.8930);">Die nachfolgenden Textrahmen beinhalten <b><i style="color:#333">Placeholder</i></b> mit unterschied-</div>
<div id="t120" class="t" style="top:586.5px;font-family:'Liberation Sans',sans-serif;font-size:33.5px;color:#6a6a6a;font-weight:normal;font-style:normal;left:2290px;transform-origin:0 0;transform:scaleX(0.8791);">lichen <b><i style="color:#333">Attributen</i></b>.</div>
<div id="t121" class="t" style="top:627.0px;font-family:'Liberation Sans',sans-serif;font-size:33.5px;color:#6a6a6a;font-weight:normal;font-style:normal;left:2290px;transform-origin:0 0;transform:scaleX(0.8935);">(Alle Blöcke sind gesperrt, die Placeholder können nur über den Formular-</div>
<div id="t122" class="t" style="top:665.5px;font-family:'Liberation Sans',sans-serif;font-size:33.5px;color:#6a6a6a;font-weight:normal;font-style:normal;left:2290px;transform-origin:0 0;transform:scaleX(0.8931);">editor befüllt werden. Durch das Attribut use-<i>standard-text-if-empty</i> = <i>true</i></div>
<div id="t123" class="t" style="top:705.5px;font-family:'Liberation Sans',sans-serif;font-size:33.5px;color:#6a6a6a;font-weight:normal;font-style:normal;left:2290px;transform-origin:0 0;transform:scaleX(0.8937);">sind die Placeholder auch im Editor vorausgefült.)</div>
<div id="t124" class="t" style="top:825.3px;font-family:'Liberation Sans',sans-serif;font-size:42px;color:#ffffff;font-weight:bold;font-style:normal;left:2317px;transform-origin:0 0;transform:translateX(-50%);">1</div>
<div id="t125" class="t" style="top:1144.3px;font-family:'Liberation Sans',sans-serif;font-size:42px;color:#ffffff;font-weight:bold;font-style:normal;left:2317px;transform-origin:0 0;transform:translateX(-50%);">2</div>
<div id="t126" class="t" style="top:1316.3px;font-family:'Liberation Sans',sans-serif;font-size:42px;color:#ffffff;font-weight:bold;font-style:normal;left:2317px;transform-origin:0 0;transform:translateX(-50%);">3</div>
<div id="t127" class="t" style="top:1450.3px;font-family:'Liberation Sans',sans-serif;font-size:42px;color:#ffffff;font-weight:bold;font-style:normal;left:2317px;transform-origin:0 0;transform:translateX(-50%);">4</div>
<div id="t128" class="t" style="top:1631.3px;font-family:'Liberation Sans',sans-serif;font-size:42px;color:#ffffff;font-weight:bold;font-style:normal;left:2317px;transform-origin:0 0;transform:translateX(-50%);">5</div>
<div id="t129" class="t" style="top:1980.3px;font-family:'Liberation Sans',sans-serif;font-size:42px;color:#ffffff;font-weight:bold;font-style:normal;left:2317px;transform-origin:0 0;transform:translateX(-50%);">6</div>
<div id="t130" class="t" style="top:2280.3px;font-family:'Liberation Sans',sans-serif;font-size:42px;color:#ffffff;font-weight:bold;font-style:normal;left:2317px;transform-origin:0 0;transform:translateX(-50%);">7</div>
<div id="t131" class="t" style="top:805.0px;font-family:'Liberation Sans',sans-serif;font-size:37px;color:#1b1b1b;font-weight:normal;font-style:normal;left:2380px;transform-origin:0 0;transform:scaleX(0.9235);">Das ist ein Beispiel-Textfeld mit mehreren Platzhaltern:</div>
<div id="t132" class="t" style="top:850.5px;font-family:'Liberation Sans',sans-serif;font-size:37px;color:#1fdbe9;font-weight:normal;font-style:normal;left:2380px;transform-origin:0 0;transform:scaleX(0.9209);">[Firma]</div>
<div id="t133" class="t" style="top:895.0px;font-family:'Liberation Sans',sans-serif;font-size:37px;color:#1fdbe9;font-weight:normal;font-style:normal;left:2380px;transform-origin:0 0;transform:scaleX(0.9213);">[Anrede] [Vorname] [Nachname]</div>
<div id="t134" class="t" style="top:940.5px;font-family:'Liberation Sans',sans-serif;font-size:37px;color:#1fdbe9;font-weight:normal;font-style:normal;left:2380px;transform-origin:0 0;transform:scaleX(0.9232);">[Straße] [Hausnummer]</div>
<div id="t135" class="t" style="top:985.5px;font-family:'Liberation Sans',sans-serif;font-size:37px;color:#1fdbe9;font-weight:normal;font-style:normal;left:2380px;transform-origin:0 0;transform:scaleX(0.9239);">[PLZ] [Stadt]</div>
<div id="t136" class="t" style="top:1030.5px;font-family:'Liberation Sans',sans-serif;font-size:37px;color:#1fdbe9;font-weight:normal;font-style:normal;left:2380px;transform-origin:0 0;transform:scaleX(0.9170);">[E-Mail]</div>
<div id="t137" class="t" style="top:1123.0px;font-family:'Liberation Sans',sans-serif;font-size:37px;color:#1fdbe9;font-weight:normal;font-style:normal;left:2380px;transform-origin:0 0;transform:scaleX(0.9241);">[Das ist ein Platzhalter-Textfeld mit Platz</div>
<div id="t138" class="t" style="top:1169.0px;font-family:'Liberation Sans',sans-serif;font-size:37px;color:#1fdbe9;font-weight:normal;font-style:normal;left:2380px;transform-origin:0 0;transform:scaleX(0.9227);">für Text bis zu</div>
<div id="t139" class="t" style="top:1215.0px;font-family:'Liberation Sans',sans-serif;font-size:37px;color:#1fdbe9;font-weight:normal;font-style:normal;left:2380px;transform-origin:0 0;transform:scaleX(0.9264);">3 Zeilen.]</div>
<div id="t140" class="t" style="top:1297.0px;font-family:'Liberation Sans',sans-serif;font-size:37px;color:#1b1b1b;font-weight:normal;font-style:normal;left:2380px;transform-origin:0 0;transform:scaleX(0.9255);">Das ist ein Beispiel-Textfeld mit einem <span style="color:#1fdbe9">[Platzhalter]</span></div>
<div id="t141" class="t" style="top:1343.5px;font-family:'Liberation Sans',sans-serif;font-size:37px;color:#1b1b1b;font-weight:normal;font-style:normal;left:2390px;transform-origin:0 0;transform:scaleX(0.9232);">umgeben von festem Text.</div>
<div id="t142" class="t" style="top:1433.0px;font-family:'Liberation Sans',sans-serif;font-size:37px;color:#1b1b1b;font-weight:normal;font-style:normal;left:2380px;transform-origin:0 0;transform:scaleX(0.9255);">Das ist ein Beispiel-Textfeld mit einem <span style="color:#1fdbe9">[Platzhalter]</span> der</div>
<div id="t143" class="t" style="top:1476.5px;font-family:'Liberation Sans',sans-serif;font-size:37px;color:#1b1b1b;font-weight:normal;font-style:normal;left:2380px;transform-origin:0 0;transform:scaleX(0.9242);"><i>mehrere data-keys</i> inkl. <i>separator</i> (#) beinhaltet.</div>
<div id="t144" class="t" style="top:1612.5px;font-family:'Liberation Sans',sans-serif;font-size:37px;color:#1b1b1b;font-weight:normal;font-style:normal;left:2380px;transform-origin:0 0;transform:scaleX(0.9260);">Das ist ein Beispiel-Textfeld mit einem</div>
<div id="t145" class="t" style="top:1657.0px;font-family:'Liberation Sans',sans-serif;font-size:37px;color:#1fdbe9;font-weight:normal;font-style:normal;left:2380px;transform-origin:0 0;transform:scaleX(0.9315);">[Platzhalter]</div>
<div id="t146" class="t" style="top:1702.0px;font-family:'Liberation Sans',sans-serif;font-size:37px;color:#1b1b1b;font-weight:normal;font-style:normal;left:2380px;transform-origin:0 0;transform:scaleX(0.9254);">der <i>mehrere data-keys</i> beinhaltet.</div>
<div id="t147" class="t" style="top:1746.0px;font-family:'Liberation Sans',sans-serif;font-size:37px;color:#1b1b1b;font-weight:normal;font-style:normal;left:2380px;transform-origin:0 0;transform:scaleX(0.9238);">Als <i>separator</i> ist ein Zeilenumbruch definiert (¶).</div>
<div id="t148" class="t" style="top:1962.5px;font-family:'Liberation Sans',sans-serif;font-size:37px;color:#1b1b1b;font-weight:normal;font-style:normal;left:2380px;transform-origin:0 0;transform:scaleX(0.9233);">Das ist ein Beispiel-Textfeld mit zwei Platzhaltern und</div>
<div id="t149" class="t" style="top:2007.5px;font-family:'Liberation Sans',sans-serif;font-size:37px;color:#1b1b1b;font-weight:normal;font-style:normal;left:2380px;transform-origin:0 0;transform:scaleX(0.9245);">einem Standardtext, der nur <i>eingeblendet</i> wird wenn</div>
<div id="t150" class="t" style="top:2052.6px;font-family:'Liberation Sans',sans-serif;font-size:37px;color:#1b1b1b;font-weight:normal;font-style:normal;left:2380px;transform-origin:0 0;transform:scaleX(0.9268);"><i>beide</i> Platzhalter befüllt wurden.</div>
<div id="t151" class="t" style="top:2097.6px;font-family:'Liberation Sans',sans-serif;font-size:37px;color:#1fdbe9;font-weight:normal;font-style:normal;left:2380px;transform-origin:0 0;transform:scaleX(0.9208);">[6a Pflichtfeld]</div>
<div id="t152" class="t" style="top:2142.6px;font-family:'Liberation Sans',sans-serif;font-size:37px;color:#1fdbe9;font-weight:normal;font-style:normal;left:2380px;transform-origin:0 0;transform:scaleX(0.9208);">[6b Pflichtfeld]</div>
<div id="t153" class="t" style="top:2261.6px;font-family:'Liberation Sans',sans-serif;font-size:37px;color:#1b1b1b;font-weight:normal;font-style:normal;left:2380px;transform-origin:0 0;transform:scaleX(0.9233);">Das ist ein Beispiel-Textfeld mit zwei Platzhaltern und</div>
<div id="t154" class="t" style="top:2306.6px;font-family:'Liberation Sans',sans-serif;font-size:37px;color:#1b1b1b;font-weight:normal;font-style:normal;left:2380px;transform-origin:0 0;transform:scaleX(0.9230);">einem Hinweis (Standardtext), der <i>ausgeblendet</i> wird</div>
<div id="t155" class="t" style="top:2351.1px;font-family:'Liberation Sans',sans-serif;font-size:37px;color:#1b1b1b;font-weight:normal;font-style:normal;left:2380px;transform-origin:0 0;transform:scaleX(0.9244);">wenn <i>beide</i> Platzhalter befüllt wurden.</div>
<div id="t156" class="t" style="top:2397.1px;font-family:'Liberation Sans',sans-serif;font-size:37px;color:#1fdbe9;font-weight:normal;font-style:normal;left:2380px;transform-origin:0 0;transform:scaleX(0.9165);">[7a Pflichtfeld]</div>
<div id="t157" class="t" style="top:2441.1px;font-family:'Liberation Sans',sans-serif;font-size:37px;color:#1fdbe9;font-weight:normal;font-style:normal;left:2380px;transform-origin:0 0;transform:scaleX(0.9165);">[7b Pflichtfeld]</div>
<div id="t158" class="t" style="top:2482.7px;font-family:'Liberation Sans',sans-serif;font-size:31.5px;color:#47e21a;font-weight:bold;font-style:normal;left:2380px;transform-origin:0 0;transform:scaleX(0.9056);">[8a] und [8b] sind Pflichtfelder. Dieser Hinweis verschwindet</div>
<div id="t159" class="t" style="top:2519.2px;font-family:'Liberation Sans',sans-serif;font-size:31.5px;color:#47e21a;font-weight:bold;font-style:normal;left:2380px;transform-origin:0 0;transform:scaleX(0.9034);">erst wenn beide Felder ausgefüllt sind.</div>
</body></html>
